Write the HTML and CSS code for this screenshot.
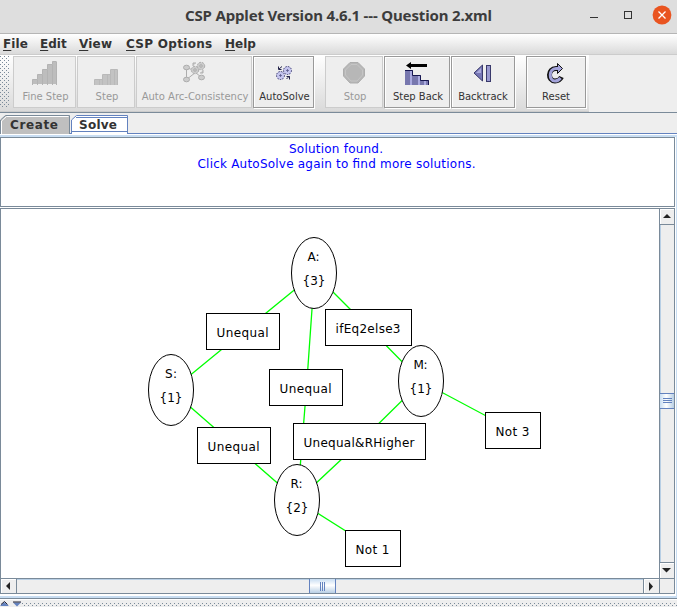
FILE: index.html
```html
<!DOCTYPE html>
<html lang="en">
<head>
<meta charset="utf-8">
<title>CSP Applet Version 4.6.1 --- Question 2.xml</title>
<link rel="stylesheet" href="styles.css">
</head>
<body>
<header class="titlebar">
  <h1><svg width="307" height="24"><text x="0" y="17" textLength="307">CSP Applet Version 4.6.1 --- Question 2.xml</text></svg></h1>
  <svg class="window-controls" width="90" height="33">
    <path d="M3 17.5h8" stroke="#333"/>
    <rect x="37.5" y="11.5" width="7" height="7" fill="none" stroke="#333"/>
    <circle cx="75" cy="15" r="9.4" fill="#e95420"/>
    <path d="M71.5 11.5l7 7m0-7l-7 7" stroke="#fff" stroke-width="1.3"/>
  </svg>
</header>
<nav class="menubar">
  <span class="m-file"><u>F</u>ile</span><span class="m-edit"><u>E</u>dit</span><span class="m-view"><u>V</u>iew</span><span class="m-csp"><u>C</u>SP Options</span><span><u>H</u>elp</span>
</nav>
<div class="toolrow">
  <div class="toolbar">
    <svg class="grip" width="9" height="53"><defs><pattern id="dots" width="4" height="4" patternUnits="userSpaceOnUse"><path d="M0 0h1v1H0zM2 2h1v1H2z" fill="#7a8a99"/></pattern></defs><rect width="9" height="52" fill="url(#dots)"/></svg>
    <button class="tool off fine"><svg width="30" height="30"><path d="M2.500 27V22.500h5v-5h5v-5h5v-5h5v-3h4V27z" fill="#bdbdbd"/><path d="M2.500 28V22.500h5v-5h5v-5h5v-5h5v-3h4M7.500 23v5M12.500 18v10M17.500 13v15M22.500 8v20M26.500 5v23" fill="none" stroke="#b3b3b3"/></svg><span>Fine Step</span></button>
    <button class="tool off step"><svg width="30" height="30"><path d="M3 28v-5h8v-5h8v-5h8v15z" fill="#c3c3c3"/><path d="M3.500 28v-5.500h8v-5h8v-5h7V28M8.500 23v5M11.500 18v10M16.500 18v10M19.500 13v15M23.500 13v15" fill="none" stroke="#b9b9b9"/></svg><span>Step</span></button>
    <button class="tool off arc"><svg width="30" height="30"><g fill="#ccc" stroke="#adadad"><path d="M7.500 10.500v12M7.500 22.500l9-7 6 5M7.500 10.500l5 2" fill="none"/><ellipse cx="7.500" cy="10.500" rx="3" ry="2.300"/><ellipse cx="7.500" cy="22.500" rx="3" ry="2.300"/><ellipse cx="22.500" cy="20.500" rx="3" ry="2.300"/><circle cx="16" cy="13" r="3.700" stroke-dasharray="2 1"/><circle cx="16" cy="13" r="1.300"/><circle cx="22" cy="9" r="3.700" stroke-dasharray="2 1"/><circle cx="22" cy="9" r="1.300"/><path d="M14 9V6h3m4 10h3v-3"/></g></svg><span>Auto Arc-Consistency</span></button>
    <button class="tool auto"><svg width="30" height="30"><g fill="#c5c5ee" stroke="#39396b"><circle cx="11.500" cy="18.500" r="3.300"/><circle cx="11.500" cy="18.500" r="4" stroke-dasharray="1.400 1.300"/><circle cx="11.500" cy="18.500" r="0.700"/><circle cx="18.500" cy="13.500" r="3.300"/><circle cx="18.500" cy="13.500" r="4" stroke-dasharray="1.400 1.300"/><circle cx="18.500" cy="13.500" r="0.700"/><path d="M13 9.500l-3 2.500M9.500 9.500v3h3M17.500 22l3-3M17.500 19.500h3v3" fill="none" stroke="#222248"/></g></svg><span>AutoSolve</span></button>
    <i class="spacer"></i>
    <button class="tool off stop"><svg width="30" height="30"><path d="M11 5.500h8l6.500 6.500v7l-6.500 7h-8l-6.500-7v-7z" fill="#b7b7b7" stroke="#adadad"/><path d="M12 7.500h6l5.500 5.500v5l-5.500 6h-6l-5.500-6v-5z" fill="none" stroke="#c5c5c5"/></svg><span>Stop</span></button>
    <button class="tool back"><svg width="30" height="30"><path d="M4 8.500l5-3.500v2h16v3H9v2z" fill="#000"/><path d="M3 28V13h8v5h8v5h8v5z" fill="#7777ae"/><path d="M9 14v14M17 19v9M23 24v4" stroke="#aaaae0" stroke-width="2"/><path d="M3 13.500h7.500v5h8v5h8V28" fill="none" stroke="#161650"/></svg><span>Step Back</span></button>
    <button class="tool track"><svg width="30" height="30"><path d="M14.500 8v16L6 16z" fill="#7777b5" stroke="#39396b"/><path d="M13 11v5H8z" fill="#aaaadb"/><rect x="18.500" y="8.500" width="4" height="16" fill="#9999cf" stroke="#39396b"/></svg><span>Backtrack</span></button>
    <i class="spacer"></i>
    <button class="tool reset"><svg width="30" height="30"><path d="M18 11.500h-3C6.500 11.500 6.500 24 14 24c3 0 5-1 6.500-4" fill="none" stroke="#111" stroke-width="5"/><path d="M16.500 6.500l5 5-5 5z" fill="#a3a3da" stroke="#111"/><path d="M18 11.500h-3C7.500 11.500 7.500 24 14 24c2.500 0 4-1 5.500-3" fill="none" stroke="#a3a3da" stroke-width="3"/></svg><span>Reset</span></button>
  </div>
</div>
<div class="tabs">
  <svg width="128" height="21">
    <path d="M0.500 21V7l5-4.500h64V21" fill="#bfbfbf" stroke="#7a8a99"/>
    <path d="M1.500 21V8l5-4.500h62" fill="none" stroke="#fff"/>
    <path d="M71.500 21V7l5-4.500h51V21" fill="#fff" stroke="#6382bf"/>
    <path d="M76 4.500h51M72 18.500h55" stroke="#6382bf"/>
    <text x="10" y="16" textLength="48">Create</text><text x="79" y="16" textLength="38">Solve</text>
  </svg>
</div>
<main class="content">
  <section class="message">
    <svg width="672" height="68"><text x="288" y="15" textLength="94">Solution found.</text><text x="196.500" y="30" textLength="278">Click AutoSolve again to find more solutions.</text></svg>
  </section>
  <section class="viewport">
    <svg class="graph" width="658" height="369" viewBox="1 209 658 369">
      <g class="edges">
        <path d="M314.500 273.500L243.500 331.500L171.500 390.500L234.500 445.500L297.500 500.500L360.500 441.500L421.500 381.500L368.500 327.500L314.500 273.500L306.500 387.500L297.500 500.500L373.500 548.500M421.500 381.500L513.500 430.500"/>
      </g>
      <g class="nodes">
        <ellipse cx="314" cy="273" rx="22.500" ry="35.500"/><ellipse cx="171" cy="390" rx="22.500" ry="35.500"/><ellipse cx="421" cy="381" rx="22.500" ry="35.500"/><ellipse cx="297" cy="500" rx="22.500" ry="35.500"/>
      </g>
      <g class="boxes">
        <rect x="206.500" y="313.500" width="73" height="36"/><rect x="325.500" y="309.500" width="86" height="36"/><rect x="269.500" y="369.500" width="73" height="36"/><rect x="197.500" y="427.500" width="73" height="36"/><rect x="293.500" y="423.500" width="132" height="36"/><rect x="485.500" y="412.500" width="55" height="36"/><rect x="345.500" y="530.500" width="55" height="36"/>
      </g>
      <text x="307.500" y="261" textLength="12">A:</text><text x="302.500" y="285" textLength="23">{3}</text>
      <text x="165" y="378" textLength="12">S:</text><text x="159.500" y="402" textLength="23">{1}</text>
      <text x="413.500" y="369" textLength="14">M:</text><text x="409.500" y="393" textLength="23">{1}</text>
      <text x="290.500" y="488" textLength="12">R:</text><text x="285.500" y="512" textLength="23">{2}</text>
      <text x="216.500" y="337" textLength="52">Unequal</text><text x="335.500" y="333" textLength="65">ifEq2else3</text><text x="279.500" y="393" textLength="52">Unequal</text><text x="207.500" y="451" textLength="52">Unequal</text><text x="303.500" y="447" textLength="111">Unequal&amp;RHigher</text><text x="495.500" y="436" textLength="34">Not 3</text><text x="355.500" y="554" textLength="34">Not 1</text>
    </svg>
    <div class="vscroll">
      <div class="arrow"><svg width="14" height="15"><path d="M3 9h8L7 5z"/></svg></div>
      <div class="track-v"><div class="thumb-v"></div></div>
      <div class="arrow"><svg width="14" height="15"><path d="M2 5h9L6.500 9.500z"/></svg></div>
    </div>
    <div class="hscroll">
      <div class="arrow"><svg width="15" height="14"><path d="M9 3v8L5 7z"/></svg></div>
      <div class="track-h"><div class="thumb-h"></div></div>
      <div class="arrow"><svg width="15" height="14"><path d="M5 3v9l4-4.500z"/></svg></div>
    </div>
    <div class="corner"></div>
  </section>
</main>
<footer class="divider"><svg width="677" height="6"><rect x="22" y="1" width="655" height="4" fill="url(#dots)"/><path d="M0 5l4-4 5 4zM13 1.500h8l-4 4z" fill="#6382bf"/><path d="M1 3.500l3.500-3 3 3M13 1h8" fill="none" stroke="#223"/></svg></footer>
</body>
</html>
```

FILE: styles.css
```css
* { box-sizing: border-box; }
body {
  margin: 0; width: 677px; height: 607px; overflow: hidden;
  display: flex; flex-direction: column; background: #eee;
  font: 12px "DejaVu Sans", sans-serif; color: #333;
}
svg { display: block; flex: none; }
.titlebar { height: 34px; flex: none; display: flex; justify-content: space-between; background: #dedede; border-bottom: 1px solid #b5b5b5; padding-left: 185px; }
.titlebar h1 { margin: 4px 0 0; font: bold 15px "Noto Sans", sans-serif; }
.titlebar text { fill: #3c3c3c; }
.menubar { height: 21px; flex: none; display: flex; padding: 3px 3px 0; background: linear-gradient(#fff, #dadada); border-bottom: 1px solid #ccc; font-weight: bold; line-height: 15px; }
.menubar u { text-underline-offset: 2px; text-decoration-thickness: 1px; }
.m-file { width: 37px; letter-spacing: 0.1px; }
.m-edit { width: 39px; }
.m-view { width: 47px; letter-spacing: 0.2px; }
.m-csp { width: 99px; letter-spacing: 0.3px; }
.toolrow { height: 58px; flex: none; border-bottom: 1px solid #7a8a99; }
.toolbar { width: 589px; height: 57px; display: flex; gap: 1px; padding-top: 1px; background: linear-gradient(#fff, #dadada); border-bottom: 1px solid #ccc; }
.grip { margin-right: 3px; }
.tool { height: 52px; flex: none; padding: 0; border: 1px solid #999; border-radius: 0; background: #eee; box-shadow: inset 1px 1px #fff, 1px 1px #fff; color: #333; font: 10px "DejaVu Sans", sans-serif; display: flex; flex-direction: column; align-items: center; }
.tool span { white-space: nowrap; line-height: 12px; margin-top: 4px; }
.off { border-color: #ccc; color: #999; box-shadow: none; }
.fine { width: 63px; }
.step { width: 58px; }
.arc { width: 116px; }
.arc svg { margin-right: 1px; }
.fine span, .step span, .arc span, .auto span, .stop span, .back span { position: relative; left: 1px; }
.auto { width: 61px; }
.stop { width: 58px; }
.back { width: 66px; }
.track { width: 64px; }
.reset { width: 60px; }
.spacer { width: 9px; flex: none; }
.tabs { height: 21px; flex: none; border-bottom: 1px solid #6382bf; font-weight: bold; }
.tabs text { fill: #333; }
.content { height: 465px; flex: none; background: #fff; border-top: 1px solid #fff; border-bottom: 1px solid #7a8a99; box-shadow: inset 0 2px #c8ddf2, inset -1px 0 #c8ddf2, inset 0 -2px #c8ddf2; padding-top: 2px; }
.message { width: 675px; height: 70px; background: #fff; border: 1px solid #7a8a99; margin-bottom: 1px; }
.message text { fill: #00f; }
.viewport { width: 675px; height: 386px; display: grid; grid-template-columns: 658px 15px; grid-template-rows: 369px 15px; border: 1px solid #7a8a99; background: #fff; }
.graph text { font-size: 12px; fill: #000; }
.edges path { stroke: #0f0; stroke-width: 1.3; fill: none; }
.nodes, .boxes { fill: #fff; stroke: #000; }
.vscroll { display: flex; flex-direction: column; border-left: 1px solid #7a8a99; }
.hscroll { display: flex; border-top: 1px solid #7a8a99; }
.arrow { background: #eee; box-shadow: inset 1px 1px #fff; flex: none; fill: #222; }
.track-v { flex: 1; padding-top: 168px; border: solid #7a8a99; border-width: 1px 0; background: linear-gradient(90deg, #b8cfe5 1px, #eee 1px); }
.thumb-v { height: 16px; border: solid #6382bf; border-width: 1px 0; background: linear-gradient(#6382bf, #6382bf) 3px 4px / 9px 1px no-repeat, linear-gradient(#6382bf, #6382bf) 3px 6px / 9px 1px no-repeat, linear-gradient(#6382bf, #6382bf) 3px 8px / 9px 1px no-repeat, linear-gradient(90deg, #c8ddf2, #fff 45%, #b8cfe5); }
.track-h { flex: 1; padding-left: 292px; border: solid #7a8a99; border-width: 0 1px; background: linear-gradient(#b8cfe5 1px, #eee 1px); }
.thumb-h { width: 27px; height: 14px; border: solid #6382bf; border-width: 0 1px; background: linear-gradient(#6382bf, #6382bf) 10px 3px / 1px 9px no-repeat, linear-gradient(#6382bf, #6382bf) 12px 3px / 1px 9px no-repeat, linear-gradient(#6382bf, #6382bf) 14px 3px / 1px 9px no-repeat, linear-gradient(#c8ddf2, #fff 45%, #b8cfe5); }
.corner { border: solid #7a8a99; border-width: 1px 0 0 1px; background: #eee; }
.divider { height: 8px; flex: none; padding-top: 1px; border-top: 1px solid #fff; background: #eee; }
```
